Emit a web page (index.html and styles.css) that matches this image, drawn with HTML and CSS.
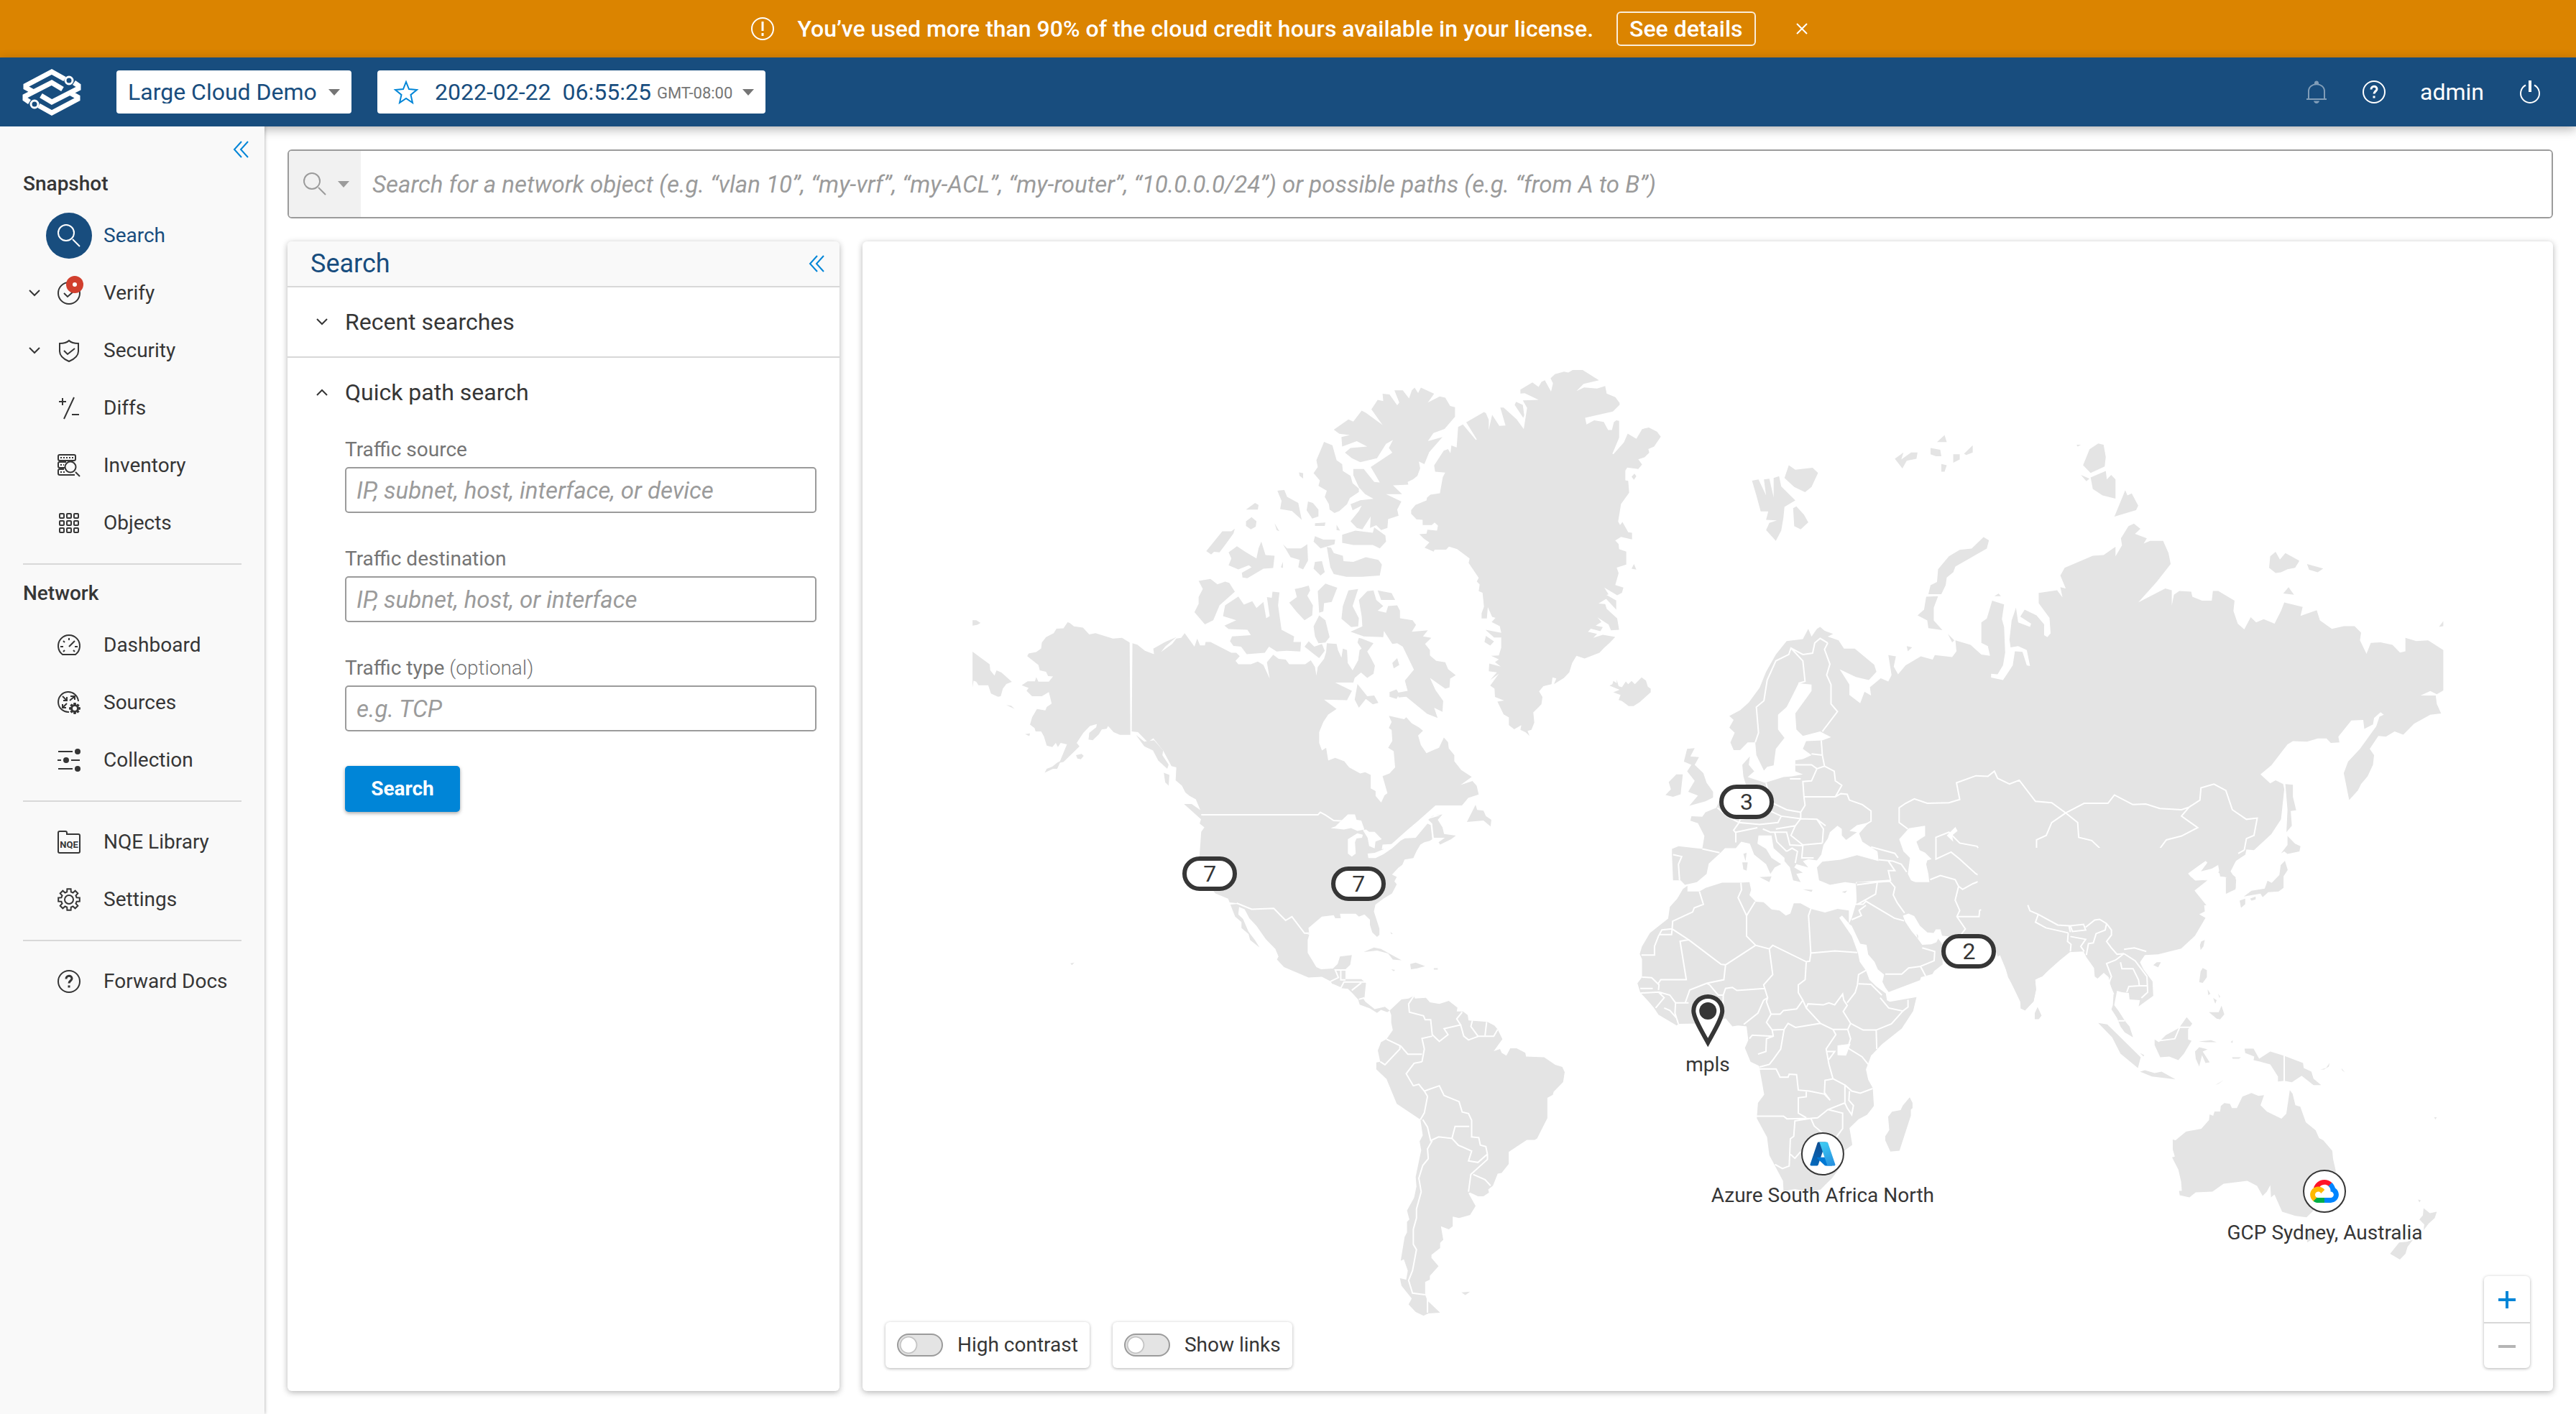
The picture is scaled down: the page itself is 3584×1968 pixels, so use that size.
FILE: index.html
```html
<!DOCTYPE html>
<html lang="en">
<head>
<meta charset="utf-8">
<title>Search - Large Cloud Demo</title>
<link rel="stylesheet" href="styles.css">
</head>
<body>
<svg class="defs" aria-hidden="true">
  <symbol id="gear" viewBox="0 0 32 32"><path d="M26.6 13.2 30.8 13.4 30.8 18.6 26.6 18.8 25.5 21.5 28.3 24.6 24.6 28.3 21.5 25.5 18.8 26.6 18.6 30.8 13.4 30.8 13.2 26.6 10.5 25.5 7.4 28.3 3.7 24.6 6.5 21.5 5.4 18.8 1.2 18.6 1.2 13.4 5.4 13.2 6.5 10.5 3.7 7.4 7.4 3.7 10.5 6.5 13.2 5.4 13.4 1.2 18.6 1.2 18.8 5.4 21.5 6.5 24.6 3.7 28.3 7.4 25.5 10.5Z"/></symbol>
  <symbol id="search" viewBox="0 0 32 32"><circle cx="12" cy="12" r="11"/><path d="m21 21 10 10"/></symbol>
  <symbol id="help" viewBox="0 0 32 32"><circle cx="16" cy="16" r="15"/><path d="M12 12.500c0-5.500 8-5.500 8-.5 0 3-4 3-4 6.500M16 21.500v3" stroke-width="3"/></symbol>
  <symbol id="collapse" viewBox="0 0 24 24"><path d="M13 1 3 12l10 11M22 1 12 12l10 11"/></symbol>
  <symbol id="down" viewBox="0 0 16 16"><path d="m1 4 7 7 7-7"/></symbol>
  <symbol id="caret" viewBox="0 0 16 9"><path d="M0 0h16L8 9z" fill="currentColor" stroke="none"/></symbol>
</svg>

<div class="banner" role="alert">
  <svg class="icon" viewBox="0 0 32 32"><circle cx="16" cy="16" r="15"/><path d="M16 6v13M16 22v4" stroke-width="3"/></svg>
  <span>You’ve used more than 90% of the cloud credit hours available in your license.</span>
  <button class="banner-action" type="button">See details</button>
  <button class="banner-close" type="button" aria-label="Dismiss"><svg class="mini" viewBox="0 0 16 16"><path d="m1 1 14 14M15 1 1 15"/></svg></button>
</div>

<header class="topbar">
  <svg class="logo" viewBox="0 0 80 65" aria-label="Forward"><path d="M15 32 4 26V23L40 4l18 10M71 19l6 4v4L40 46l-15-9M65 33l11 6v3L40 61 22 51M9 46l-6-4v-4l37-19 15 9"/><circle cx="64" cy="16" r="5"/><circle cx="16" cy="49" r="5"/></svg>
  <div class="picker">
    <select aria-label="Network"><option>Large Cloud Demo</option></select>
    <svg class="caret"><use href="#caret"/></svg>
  </div>
  <button class="snapshot" type="button">
    <svg class="icon star" viewBox="0 0 32 32"><path d="m16 2 4 10 11 1-8.500 7L25 31l-9-6-9 6 2.500-11L1 13l11-1z"/></svg>
    <span class="date">2022-02-22</span><span class="time">06:55:25</span><span class="zone">GMT-08:00</span>
    <svg class="caret"><use href="#caret"/></svg>
  </button>
  <div class="account">
    <button type="button" class="bell" aria-label="Notifications"><svg class="icon" viewBox="0 0 32 32"><path d="M5 26V15c0-13 22-13 22 0v11M2 26h28"/><path d="M12 28.500h8c-1 4.500-7 4.500-8 0zM13 5c-1-6 7-6 6 0z" fill="currentColor" stroke="none"/></svg></button>
    <button type="button" aria-label="Help"><svg class="icon"><use href="#help"/></svg></button>
    <button type="button">admin</button>
    <button type="button" aria-label="Sign out"><svg class="icon" viewBox="0 0 32 32"><path d="M10 6.500a13 13 0 1 0 12 0"/><path d="M16 0v16" stroke-width="4"/></svg></button>
  </div>
</header>

<div class="layout">
  <nav class="sidebar">
    <button class="collapse-nav" type="button" aria-label="Collapse menu"><svg class="collapse"><use href="#collapse"/></svg></button>
    <h2>Snapshot</h2>
    <a class="item active" href="#search-panel"><span class="glyph"><svg class="icon"><use href="#search"/></svg></span>Search</a>
    <a class="item" href="#verify"><svg class="mini"><use href="#down"/></svg><span class="glyph"><svg class="icon" viewBox="0 0 32 32"><circle cx="16" cy="16" r="15"/><path d="m9 16 5 5 9-8"/><circle cx="24" cy="4" r="12" fill="#d13f2e" stroke="none"/><circle cx="24" cy="4" r="3" fill="#fff" stroke="none"/></svg></span>Verify</a>
    <a class="item" href="#security"><svg class="mini"><use href="#down"/></svg><span class="glyph"><svg class="icon" viewBox="0 0 32 32"><path d="M16 2c-3 3-8 4-13 4v11c0 7 6 11 13 14 7-3 13-7 13-14V6c-5 0-10-1-13-4zM9 16l5 5 10-8"/></svg></span>Security</a>
    <a class="item" href="#diffs"><span class="glyph"><svg class="icon" viewBox="0 0 32 32"><path d="M2 7h10M7 2v10M23 1 9 31M20 25h10"/></svg></span>Diffs</a>
    <a class="item" href="#inventory"><span class="glyph"><svg class="icon" viewBox="0 0 32 32"><path d="M24 29H3a2 2 0 0 1-2-2v-4a2 2 0 0 1 2-2h6M10 19H3a2 2 0 0 1-2-2v-4a2 2 0 0 1 2-2h9M3 1h20a2 2 0 0 1 2 2v4a2 2 0 0 1-2 2H3a2 2 0 0 1-2-2V3a2 2 0 0 1 2-2z"/><path d="M4 5h18M4 15h5M4 25h7" stroke-dasharray="2"/><circle cx="18" cy="18" r="7.500"/><path d="m25 25 6 6"/></svg></span>Inventory</a>
    <a class="item" href="#objects"><span class="glyph"><svg class="icon" viewBox="0 0 32 32"><g><rect x="3" y="3" width="6" height="6" rx="1"/><rect x="13" y="3" width="6" height="6" rx="1"/><rect x="23" y="3" width="6" height="6" rx="1"/><rect x="3" y="13" width="6" height="6" rx="1"/><rect x="13" y="13" width="6" height="6" rx="1"/><rect x="23" y="13" width="6" height="6" rx="1"/><rect x="3" y="23" width="6" height="6" rx="1"/><rect x="13" y="23" width="6" height="6" rx="1"/><rect x="23" y="23" width="6" height="6" rx="1"/></g></svg></span>Objects</a>
    <hr>
    <h2>Network</h2>
    <a class="item" href="#dashboard"><span class="glyph"><svg class="icon" viewBox="0 0 32 32"><path d="M7 29h18A15 15 0 1 0 7 29zM16 18l8-8M16 6v3M4 18h4M24 18h4M8 10l2 2M8 25l2-2M24 25l-2-2"/></svg></span>Dashboard</a>
    <a class="item" href="#sources"><span class="glyph"><svg class="icon" viewBox="0 0 32 32"><path d="M16 29A14 14 0 1 1 29 14M7 7l6 6M13 8v5H8M17 13l7-6M18 7h6v5M13 17l-6 6M7 18v5h5"/><svg x="16" y="16" width="16" height="16" viewBox="0 0 32 32"><use href="#gear" fill="#363636"/><circle cx="16" cy="16" r="6" fill="#f9f9f9" stroke="none"/></svg></svg></span>Sources</a>
    <a class="item" href="#collection"><span class="glyph"><svg class="icon" viewBox="0 0 32 32"><path d="M1 4h20M0 16h5M19 16h12M1 28h20"/><g fill="#363636" stroke="none"><circle cx="28" cy="4" r="4"/><circle cx="12" cy="16" r="4"/><circle cx="28" cy="28" r="4"/></g></svg></span>Collection</a>
    <hr>
    <a class="item" href="#nqe"><span class="glyph"><svg class="icon" viewBox="0 0 32 32"><path d="M1 29V3a2 2 0 0 1 2-2h8a2 2 0 0 1 2 2v2h16a2 2 0 0 1 2 2v22a2 2 0 0 1-2 2H3a2 2 0 0 1-2-2z"/><text x="16" y="24" class="nqe">NQE</text></svg></span>NQE Library</a>
    <a class="item" href="#settings"><span class="glyph"><svg class="icon"><use href="#gear"/><circle cx="16" cy="16" r="6"/></svg></span>Settings</a>
    <hr>
    <a class="item" href="#docs"><span class="glyph"><svg class="icon"><use href="#help"/></svg></span>Forward Docs</a>
  </nav>

  <main>
    <div class="searchbar">
      <button type="button" aria-label="Search type"><svg class="icon"><use href="#search"/></svg><svg class="caret"><use href="#caret"/></svg></button>
      <input type="text" aria-label="Search" placeholder="Search for a network object (e.g. “vlan 10”, “my-vrf”, “my-ACL”, “my-router”, “10.0.0.0/24”) or possible paths (e.g. “from A to B”)">
    </div>

    <div class="panels">
      <section class="panel search-panel" id="search-panel">
        <div class="panel-head"><h1>Search</h1><button type="button" aria-label="Collapse panel"><svg class="collapse"><use href="#collapse"/></svg></button></div>
        <button class="fold" type="button"><svg class="mini"><use href="#down"/></svg>Recent searches</button>
        <button class="fold open" type="button"><svg class="mini"><use href="#down"/></svg>Quick path search</button>
        <form class="path-form">
          <div class="field"><label for="src">Traffic source</label><input id="src" type="text" placeholder="IP, subnet, host, interface, or device"></div>
          <div class="field"><label for="dst">Traffic destination</label><input id="dst" type="text" placeholder="IP, subnet, host, or interface"></div>
          <div class="field"><label for="type">Traffic type <span>(optional)</span></label><input id="type" type="text" placeholder="e.g. TCP"></div>
          <button class="primary" type="button">Search</button>
        </form>
      </section>

      <section class="panel map-panel" aria-label="Map">
        <svg class="world" viewBox="1200 336 2352 1600" aria-hidden="true">
          <g transform="translate(1340 480) scale(.48469 .47194)">
            <!-- Alaska and the eastern tip of Chukotka -->
            <path d="M478 878 456 864 430 866 380 850 362 854 344 834 318 830 306 820 300 818 288 836 268 837 260 850 238 862 226 878 224 895 210 906 188 910 184 918 216 944 220 960 238 964 244 977 258 978 246 993 216 993 210 980 206 992 185 992 168 1004 188 1012 182 1020 198 1036 226 1036 246 1024 250 1040 254 1058 240 1068 236 1078 212 1074 198 1098 192 1120 205 1130 208 1140 224 1140 232 1155 240 1182 256 1186 266 1174 272 1186 280 1174 298 1178 278 1228 270 1232 256 1244 240 1250 234 1262 258 1250 270 1250 278 1232 288 1230 312 1206 334 1184 326 1174 345 1144 364 1124 384 1118 382 1128 362 1144 360 1164 372 1166 390 1148 398 1134 412 1132 416 1124 432 1142 450 1150 480 1150ZM324 1210 340 1206 346 1212 338 1222 328 1220ZM27 905 76 942 78 960 90 975 96 960 110 966 140 994 124 1000 114 1014 108 1036 100 1038 80 1028 72 1004 44 1004 38 994 30 990 27 1010ZM27 812 38 812 50 820 40 826 27 828ZM124 1062 138 1064 148 1074 136 1068ZM178 1148 192 1146 190 1154Z"/>
            <!-- Canadian mainland -->
            <path d="M486 880 500 884 522 902 548 912 546 896 580 876 612 862 580 890 568 906 600 882 612 866 626 864 636 850 664 890 672 866 680 886 694 886 696 876 710 876 770 908 784 908 794 918 782 932 790 942 826 942 846 934 862 944 880 984 872 936 890 914 906 926 926 928 936 942 982 942 998 930 1010 950 1014 976 1018 950 1036 926 1042 906 1044 880 1072 882 1076 900 1086 922 1090 896 1102 900 1104 938 1118 960 1134 930 1138 900 1144 896 1132 878 1136 864 1144 866 1178 880 1160 904 1170 922 1182 946 1178 970 1160 982 1142 966 1124 982 1120 996 1068 996 1116 1020 1102 1048 1036 1046 1072 1074 1048 1090 1034 1112 1022 1142 1022 1174 1030 1196 1042 1188 1048 1226 1068 1218 1094 1228 1108 1246 1140 1264 1154 1260 1170 1268 1170 1308 1184 1316 1184 1330 1200 1350 1210 1328 1218 1322 1204 1272 1224 1264 1240 1246 1236 1198 1220 1188 1232 1168 1230 1136 1222 1130 1230 1112 1222 1094 1266 1104 1272 1098 1288 1116 1308 1128 1320 1138 1306 1152 1314 1180 1330 1204 1352 1194 1366 1188 1380 1158 1392 1172 1394 1190 1410 1210 1410 1228 1430 1254 1460 1274 1428 1298 1462 1286 1474 1300 1480 1326 1450 1336 1432 1358 1356 1358 1306 1404 1276 1430 1210 1490 1180 1512 1160 1512 1100 1460 1022 1388 704 1384 694 1396 680 1370 668 1340 650 1330 638 1320 628 1300 610 1284 612 1246 598 1242 574 1196 546 1160 530 1172 502 1142 484 1140Z"/>
            <path d="M496 1150 520 1170 548 1166 574 1196 572 1210 590 1238 586 1250 560 1226 545 1196 520 1184ZM576 1262 592 1268 590 1300 580 1290ZM634 1354 656 1354 684 1374 696 1404 684 1400Z"/>
            <!-- Arctic islands -->
            <path d="M1064 250 1106 220 1120 226 1144 194 1156 200 1204 236 1172 190 1190 162 1206 166 1204 144 1224 146 1246 178 1252 170 1238 134 1262 134 1280 158 1288 134 1296 126 1306 142 1314 126 1352 144 1334 170 1368 152 1384 156 1398 180 1412 184 1412 212 1382 248 1350 260 1334 284 1376 272 1338 316 1324 352 1308 344 1312 364 1304 386 1292 396 1276 404 1278 412 1234 414 1260 440 1214 440 1258 462 1246 486 1250 504 1220 514 1218 540 1200 546 1186 532 1168 540 1170 506 1146 544 1130 540 1112 520 1136 490 1144 474 1118 488 1112 470 1140 458 1178 454 1154 440 1136 420 1120 384 1120 366 1150 366 1180 404 1196 406 1186 388 1170 360 1232 318 1222 304 1234 280 1214 292 1188 334 1140 346 1116 334 1096 318 1112 304 1160 300 1130 284 1088 300 1086 272 1110 266 1080 262ZM1036 286 1060 296 1072 340 1088 352 1090 372 1112 386 1118 408 1136 424 1136 434 1110 452 1102 470 1080 490 1066 496 1052 486 1050 470 1038 448 1044 430 1020 416 1024 400 1006 378 1018 360 1014 340 1028 306ZM1088 560 1126 548 1176 554 1180 538 1212 562 1214 580 1196 600 1176 590 1120 590 1088 584ZM1044 596 1056 598 1064 614 1090 622 1092 638 1120 640 1156 626 1192 634 1202 648 1196 680 1146 684 1100 684 1064 676 1054 656ZM902 430 922 428 930 448 962 466 972 516 944 490 910 484 914 460ZM990 462 1004 466 1020 486 1020 506 1002 512 986 488ZM964 376 976 378 976 394 966 386ZM1010 526 1040 524 1038 534 1010 534ZM1010 564 1034 574 1068 574 1066 588 1026 600 1006 580ZM812 486 838 466 848 472 846 486ZM812 520 828 508 842 520 840 536 826 544 812 534ZM698 608 744 550 770 550 780 542 776 556 752 590 736 612 720 610 712 618ZM762 650 770 630 762 612 786 594 810 610 842 630 848 600 856 580 868 620 894 622 890 658 862 660 816 688 802 686 800 672 828 656 820 650 790 662ZM912 656 918 640 918 658ZM918 588 930 600 970 600 988 588 990 636 976 662 962 656 966 634 940 626ZM1010 640 1030 638 1038 670 1026 680 1006 660ZM676 696 710 690 730 706 752 698 764 702 780 728 736 768 718 812 694 824 664 788 676 764 676 744 688 720ZM746 800 752 768 790 742 806 766 830 756 842 776 862 758 870 806 880 800 872 744 886 746 888 728 908 730 904 768 914 840 950 860 948 876 970 876 968 904 930 902 900 904 878 890 866 908 814 912 798 890 776 888 766 874 772 860 826 856 816 840 762 838 750 828 784 812ZM936 760 958 744 952 720 970 716 992 710 996 724 988 740 1004 768 1002 798 980 812 958 788ZM1018 726 1040 704 1074 716 1058 758 1036 762 1034 786 1022 790ZM1006 830 1022 798 1040 812 1052 862 1040 878 1020 880 1010 860ZM1086 808 1090 770 1106 724 1134 720 1118 770 1136 806 1134 830 1114 832ZM1136 752 1160 726 1178 724 1186 752 1206 770 1190 784 1214 790 1220 770 1246 768 1254 784 1254 806 1290 812 1300 826 1288 846 1334 842 1320 860 1344 864 1326 882 1340 900 1340 916 1358 932 1384 936 1392 956 1414 974 1398 984 1396 1010 1384 1014 1362 998 1340 982 1356 1018 1378 1050 1376 1082 1352 1070 1362 1100 1332 1088 1296 1058 1272 1038 1250 1040 1246 1026 1276 1020 1268 990 1294 958 1262 890 1246 880 1232 882 1208 844 1206 862 1150 860 1112 846 1146 830 1144 800ZM1190 724 1230 732 1240 752 1200 752ZM1232 938 1246 924 1252 944 1236 954ZM1224 1024 1244 1016 1252 1030 1244 1044 1224 1038ZM1124 1046 1132 1000 1160 1036 1180 1034 1192 1056 1176 1060 1156 1044 1136 1070ZM980 890 992 874 1008 890 1030 882 1038 902 1022 924 1002 908ZM1072 530 1082 548 1072 546ZM894 526 908 550 900 546Z"/>
          </g>
          <g transform="translate(1340 1120) scale(.54847 .52296)">
            <!-- United States, Mexico and Central America -->
            <path d="M622 28 900 28 906 22 940 42 976 60 1020 70 1030 110 1026 136 1046 142 1066 132 1088 116 1116 90 1148 88 1178 50 1186 54 1190 92 1184 96 1170 100 1160 106 1150 124 1142 142 1120 146 1114 160 1104 168 1088 186 1100 192 1094 204 1100 212 1088 236 1066 250 1046 266 1042 284 1056 330 1056 346 1050 352 1038 340 1032 320 1032 306 1018 292 1004 298 996 290 956 290 958 302 944 302 940 294 910 298 876 328 878 344 866 342 834 298 818 308 788 276 732 278 694 262 676 260 672 250 640 236 620 210 600 160 600 130 604 72 612 60 600 50 606 30Z"/>
            <path d="M1190 50 1180 40 1190 30 1216 26 1204 40 1216 60 1220 78 1250 82 1238 92 1210 106 1206 100 1222 88 1194 88ZM1278 46 1300 0 1304 14 1320 16 1326 30 1340 40 1338 58 1320 42Z"/>
            <path d="M678 266 700 264 732 278 788 276 818 308 834 298 866 342 878 346 874 360 874 394 896 432 908 438 938 436 950 424 956 404 986 400 982 426 970 438 970 464 1010 464 1022 474 1018 514 1014 514 1020 524 1044 544 1070 538 1082 548 1076 552 1060 546 1050 554 1032 542 1006 532 1002 518 986 500 976 490 958 488 938 480 932 470 910 458 876 460 814 432 796 412 800 404 792 384 768 358 744 322 726 302 714 278 700 272 698 292 710 304 724 338 740 360 752 380 728 360 724 344 706 328 706 312 690 298ZM1016 392 1042 380 1060 384 1112 414 1090 412 1078 396 1050 388ZM1134 424 1148 420 1172 430 1150 436 1136 438ZM1086 438 1096 440 1092 443ZM1194 435 1204 435 1204 439 1194 439ZM272 422 282 420 276 427ZM1084 338 1090 344 1086 344Z"/>
            <!-- South America -->
            <path d="M1082 548 1112 518 1130 516 1144 508 1146 516 1174 514 1184 526 1208 530 1232 522 1254 540 1252 550 1268 550 1280 560 1282 574 1330 578 1348 588 1356 598 1368 624 1346 656 1362 650 1366 660 1378 668 1388 648 1404 648 1426 660 1428 670 1474 672 1502 692 1520 698 1526 712 1522 738 1498 764 1496 772 1482 780 1482 834 1456 888 1450 892 1430 892 1384 924 1384 956 1366 980 1356 982 1344 1014 1332 1024 1334 1032 1320 1042 1306 1042 1286 1032 1282 1034 1300 1068 1286 1092 1258 1100 1242 1096 1242 1122 1232 1130 1212 1122 1218 1158 1210 1166 1210 1180 1188 1198 1188 1206 1206 1228 1184 1254 1184 1264 1172 1270 1172 1304 1178 1320 1210 1352 1180 1354 1168 1360 1148 1350 1130 1330 1138 1314 1112 1280 1108 1260 1124 1264 1128 1240 1118 1210 1110 1214 1120 1150 1126 1138 1126 1110 1132 1104 1126 1080 1144 1046 1150 1016 1148 990 1162 920 1158 896 1166 880 1160 838 1100 796 1074 730 1048 704 1048 686 1058 684 1052 654 1060 632 1074 624 1090 600 1086 580 1086 560ZM1264 1298 1286 1296 1274 1305Z"/>
            <path class="border" d="M604 27H900L906 20 920 28 940 42 976 44M694 262 732 278 788 276 818 308 834 298 866 342H878M932 470 952 460 944 440H970M958 440V466H970M936 478 958 488 966 472 1022 472M986 494 1010 474M1004 518 1018 514M1144 508 1130 530 1132 552 1168 562 1172 572 1186 572 1190 612 1208 630 1230 612 1220 596 1262 586 1252 570 1266 552M1262 586 1270 616 1282 626 1308 616 1346 616 1356 598M1292 574 1288 590 1306 616M1328 578 1324 614M1190 616 1164 622 1170 650 1164 684M1164 664H1128L1110 642 1074 624M1108 640V650L1070 692 1058 684M1164 684 1144 688 1124 716 1142 748 1156 744 1170 762 1178 776 1170 820 1160 838M1170 762 1208 748 1220 774 1258 790 1266 818 1282 822 1290 840V884M1166 838 1178 858 1186 894 1206 884 1240 888 1248 856 1284 856M1190 894 1178 916 1180 942 1166 960 1156 994 1162 1030 1150 1076V1100L1142 1130V1170L1150 1184 1140 1240 1130 1266 1140 1300 1172 1304M1178 1310V1352M1240 888 1256 906 1290 922 1282 948 1306 952 1330 930 1326 910 1312 906 1308 886 1288 884M1330 930V944L1288 984 1282 1030M1294 984 1324 998 1338 1014"/>
            <path class="water" d="M932 62 944 58 976 26 994 26 998 40 1010 42 1018 66 1000 70 984 62 966 66ZM976 92 1000 76 1014 80 1012 88 998 90 994 100 996 130 986 138 976 130ZM1014 68 1022 66 1030 72 1044 72 1062 92 1046 98 1044 116 1030 110 1026 88ZM1026 130 1044 128 1072 116 1080 122 1064 130 1046 142 1028 142ZM1064 106 1094 104 1088 116 1062 118ZM1090 106 1112 88 1150 52 1196 28 1212 28 1180 38 1120 90Z"/>
          </g>
          <g transform="translate(1900 480) scale(.33333 .35714)">
            <!-- Greenland and Iceland -->
            <path d="M286 470 326 412 344 406 354 422 358 392 380 400 386 320 406 310 460 370 464 368 420 302 494 262 502 266 514 292 514 332 528 272 558 316 584 314 562 244 576 244 630 290 660 328 674 246 656 216 722 214 664 188 646 190 646 174 696 146 722 164 734 144 748 138 774 182 782 150 772 130 790 114 828 104 846 108 864 98 906 98 974 138 910 152 880 180 912 166 966 170 1000 160 1006 190 1042 204 1060 226 1060 234 1032 260 916 284 922 310 954 294 994 300 1012 332 1028 332 1036 302 1046 294 1058 296 1058 362 1030 424 1034 426 1078 380 1094 346 1130 366 1154 328 1182 322 1216 338 1232 358 1204 396 1180 406 1184 420 1164 438 1138 446 1154 466 1138 484 1092 478 1084 490 1084 528 1096 530 1100 576 1066 620 1054 688 1062 702 1072 690 1096 730 1112 732 1112 758 1066 748 1042 762 1056 776 1058 796 1088 806 1088 856 1048 868 1056 890 1042 936 1076 946 1070 966 1050 976 996 946 1014 972 960 986 1004 974 1046 996 1046 1032 1004 990 972 1008 1000 1010 1006 1028 1050 1066 1058 1110 1024 1112 1014 1090 968 1062 984 1080 960 1094 990 1100 980 1116 940 1106 928 1118 966 1126 950 1142 990 1130 1042 1138 1020 1160 996 1180 976 1200 914 1222 880 1212 862 1240 850 1276 828 1298 786 1322 796 1300 780 1296 776 1322 742 1330 724 1350 738 1372 734 1400 722 1412 700 1432 704 1472 692 1500 676 1504 684 1524 668 1510 646 1500 650 1482 620 1498 598 1482 598 1452 576 1440 550 1390 578 1386 540 1372 538 1340 520 1328 556 1282 520 1306 548 1276 514 1272 516 1242 564 1254 540 1236 556 1226 524 1212 556 1210 566 1180 566 1140 536 1140 500 1110 566 1122 560 1096 526 1080 542 1064 528 1060 510 1022 506 1066 484 1066 484 1046 494 1020 488 966 472 960 476 934 464 922 472 908 430 850 434 832 382 796 348 786 336 798 288 798 284 806 246 790 266 770 244 756 224 738 254 736 258 720 298 724 302 704 288 692 276 702 238 702 238 682 212 680 190 658 190 644 208 624 254 606 256 596 270 584 310 578 322 516 332 498 290 494ZM496 1158 502 1134 536 1156 520 1172ZM622 234 628 222 656 234 662 274 658 284ZM1110 514 1122 502 1130 512 1120 526ZM1110 872 1120 854 1130 876ZM1018 1328 1030 1322 1034 1310 1048 1318 1048 1304 1056 1330 1070 1334 1086 1312 1096 1322 1110 1310 1124 1322 1152 1296 1170 1308 1178 1332 1190 1340 1190 1354 1144 1392 1118 1408 1098 1408 1070 1388 1056 1384 1064 1364 1034 1354 1060 1344Z"/>
          </g>
          <g transform="translate(2260 560) scale(.75255 .44643)">
            <!-- Europe, Russia and northern Asia -->
            <path d="M362 700 370 712 386 722 376 730 396 742 406 768 426 768 462 818 466 840 452 866 428 856 398 832 416 880 416 912 436 938 444 902 456 914 454 888 474 860 488 870 494 850 488 788 502 792 498 824 506 848 520 820 548 792 570 802 574 788 606 794 614 776 612 742 640 756 660 786 676 790 672 760 660 750 660 686 670 674 680 618 702 630 698 676 702 700 704 780 700 820 690 848 678 846 678 858 700 866 718 820 722 776 736 778 744 820 750 822 744 772 728 760 714 764 712 740 716 680 724 640 728 686 750 700 752 690 732 668 740 646 762 664 776 692 776 726 782 732 788 720 786 672 766 626 766 594 800 586 810 608 806 576 816 580 806 540 814 516 866 478 886 476 908 450 908 480 920 446 918 424 932 386 942 378 954 394 944 410 966 424 960 440 972 432 996 432 1006 470 1010 504 984 560 950 624 1000 580 1012 586 1012 634 1016 600 1026 588 1048 590 1050 606 1068 618 1086 618 1088 588 1098 588 1128 618 1126 650 1134 690 1146 708 1158 670 1168 686 1182 676 1202 690 1214 650 1220 624 1254 638 1250 666 1280 648 1286 680 1308 706 1330 698 1350 698 1362 718 1360 742 1372 784 1380 750 1398 748 1420 756 1434 780 1444 776 1444 734 1464 744 1486 742 1514 772 1514 898 1502 910 1490 900 1472 914 1500 914 1502 940 1510 970 1490 974 1460 1002 1440 1036 1424 1026 1408 1042 1394 1040 1378 1080 1386 1100 1384 1130 1374 1166 1362 1190 1356 1210 1340 1240 1330 1156 1338 1120 1360 1080 1390 1010 1396 980 1404 974 1398 966 1386 984 1384 1004 1368 1018 1366 990 1344 992 1320 1042 1322 1060 1306 1062 1298 1048 1282 1048 1262 1058 1236 1056 1226 1066 1196 1132 1176 1160 1194 1188 1204 1178 1218 1190 1220 1206 1214 1300 1196 1346 1164 1396 1150 1394 1148 1410 1130 1430 1112 1456 1130 1480 1130 1514 1112 1532 1112 1480 1098 1466 1110 1430 1086 1454 1066 1462 1080 1430 1076 1428 1040 1468 1056 1492 1078 1490 1054 1522 1076 1568 430 1568 428 1500 408 1496 380 1504 360 1490 356 1450 366 1432 400 1426 430 1412 470 1430 468 1400 440 1370 434 1344 452 1310 430 1318 416 1336 430 1340 410 1364 402 1350 402 1330 394 1320 380 1340 376 1360 368 1380 364 1410 356 1428 340 1424 330 1430 340 1450 318 1440 314 1450 330 1466 318 1470 326 1496 312 1490 306 1450 296 1430 296 1420 276 1390 272 1350 248 1350 246 1376 262 1392 272 1420 290 1440 278 1450 270 1470 262 1440 240 1410 232 1376 216 1370 206 1390 186 1390 178 1404 156 1438 152 1470 134 1496 112 1504 104 1490 90 1490 88 1412 88 1392 100 1384 144 1392 148 1352 136 1312 122 1304 124 1290 144 1292 150 1278 170 1264 176 1240 200 1220 226 1200 220 1166 218 1130 232 1104 230 1130 240 1150 228 1168 260 1186 294 1168 310 1166 330 1160 316 1150 316 1116 330 1112 346 1100 330 1080 336 1056 366 1054 382 1044 362 1026 330 1040 318 1020 316 970 346 900 346 880 322 876 312 910 300 950 284 974 284 1020 296 1046 280 1080 276 1132 264 1136 258 1148 244 1100 242 1060 228 1060 214 1084 202 1084 196 1060 204 1030 194 1014 202 990 194 978 214 960 230 936 250 890 262 840 280 786 300 744 330 738 340 706 346 730 356 706Z"/>
            <!-- British Isles, Mediterranean and Arctic islands, Sakhalin, Hokkaido -->
            <path d="M116 1080 130 1078 122 1104 138 1106 130 1130 146 1156 152 1186 164 1214 164 1232 150 1244 120 1258 136 1226 118 1214 130 1180 116 1150 124 1130 110 1120ZM82 1184 96 1160 108 1160 104 1222 90 1230 76 1224 86 1206ZM250 1480 272 1478 268 1496ZM218 1434 228 1434 226 1460 220 1456ZM220 1408 226 1404 224 1430ZM402 1526 412 1522 408 1530ZM330 1518 348 1520 346 1526ZM236 244 248 240 262 290 258 240 268 238 276 296 276 236 286 230 290 262 316 306 296 326 294 360 290 400 280 432 262 398 268 376 282 368 262 366 266 340 252 340 244 290ZM296 236 304 196 316 210 348 204 358 220 346 264 334 280 314 264ZM312 330 318 324 332 350 340 374 326 396 314 386ZM578 124 592 102 596 124ZM500 176 516 156 512 178 530 156 542 156 540 176 522 182 514 206ZM566 142 584 148 586 168 576 168 566 162ZM608 162 620 162 620 178 608 188ZM628 160 644 134 644 156 632 164ZM586 192 596 196 592 216 586 216ZM848 196 860 146 876 128 886 132 890 170 888 200 862 220ZM862 234 890 214 892 240 900 226 908 240 908 300 884 290 866 270ZM844 226 860 238 854 246ZM926 274 930 290 938 284 950 322 946 336 906 356ZM1194 480 1204 466 1212 490 1222 470 1248 494 1240 516 1226 520 1214 530 1204 532 1192 516ZM1262 504 1292 518 1282 530 1266 522ZM1218 596 1228 576 1238 600ZM664 420 674 430 670 456 612 512 608 530 596 546 594 570 586 598 562 598 566 570 578 560 580 520 600 480 620 460 642 456ZM558 606 580 604 572 640 572 680 588 710 562 704 560 680 542 664 554 646ZM598 722 610 742 606 748ZM522 760 532 764 524 776ZM684 604 692 596 696 604ZM1222 1190 1236 1192 1236 1230 1242 1272 1232 1274 1234 1320 1224 1340 1226 1270ZM1226 1352 1240 1376 1250 1384 1248 1400 1226 1408 1220 1400 1214 1406 1226 1380ZM1506 700 1514 682 1514 698ZM836 132 844 132 838 138Z"/>
            <path class="border" d="M242 1060 248 1030 244 950 258 930 264 866 280 806 304 786 308 766 330 786 348 782 352 750 362 736 376 750M308 766 330 806 334 870 322 876M376 750 370 770 380 816 374 850 382 880V940L394 964 366 1026M364 1054 366 1100 370 1134M346 1096 366 1100M316 1130H346L356 1142 370 1134 388 1150 390 1180 402 1194 390 1230M356 1142 346 1180 330 1182 332 1230M326 1174H306M332 1230H390L400 1220 412 1222 416 1240 440 1254 456 1274V1306L434 1328M332 1230 334 1256 326 1278V1298M262 1186 270 1246 300 1270 326 1278M262 1268 290 1290 326 1298 356 1300 372 1320M250 1290 214 1300 212 1310 250 1316 284 1310 290 1290M316 1320 308 1350 330 1380 366 1374M326 1298 316 1320 280 1330M356 1300 368 1330 366 1374M256 1330 270 1340 300 1340 306 1380 330 1382 328 1420 350 1420M278 1340 282 1370 300 1400M300 1400 310 1390 320 1400 316 1436M206 1340 246 1326M212 1310 202 1334 206 1342V1372M172 1264 190 1290 212 1310M144 1392 176 1404M90 1410 106 1416 100 1440 102 1490M524 1330 508 1310V1264L520 1250 536 1236 560 1250 600 1248 620 1238 614 1186 650 1164 672 1166 684 1150 690 1172 712 1190 730 1178 760 1244 790 1248 816 1280 790 1310 780 1350 762 1364V1404L728 1394 710 1406 690 1398 668 1430 652 1384 620 1374 600 1340 576 1356V1424L604 1402 620 1424 650 1470 668 1484M762 1404 730 1440 706 1450 690 1446 690 1420 668 1430M668 1484 670 1454 690 1446M690 1430 704 1440M706 1450 722 1476 700 1500M816 1280 850 1250 894 1250 906 1224 940 1254 964 1252 990 1266 1030 1270 1044 1262 1064 1240 1066 1202 1090 1190 1112 1210 1124 1270 1150 1300 1170 1296 1164 1350 1150 1360 1146 1396M816 1280 838 1310 840 1356 864 1366 884 1398 920 1404 948 1420 986 1400 1002 1364 1030 1352 1060 1326 1030 1290 1044 1262M1146 1396 1110 1430M1112 1480 1126 1470M456 1386 500 1406 506 1420M470 1426 496 1430 512 1440 522 1464M488 1430 500 1460 488 1460 492 1490 428 1498"/>
            <path class="water" d="M556 1320 526 1328 508 1362 516 1400 528 1420 524 1470 530 1490 546 1502 564 1498 562 1470 558 1440 560 1428 568 1424 556 1404 546 1396 540 1370 548 1360 556 1352ZM596 1350 612 1324 616 1336 606 1350 608 1370Z"/>
          </g>
          <g transform="translate(2260 1160) scale(.39541 .35714)">
            <!-- Middle East and India -->
            <path d="M818 190 818 262 800 330 790 352 800 360 830 430 852 434 858 472 880 500 892 530 914 550 908 578 918 600 930 618 1040 572 1044 560 1084 548 1090 536 1120 510 1118 430 1104 410 1098 424 1080 432 1048 434 1028 404 1010 380 988 344 980 320 1000 312 1020 322 1040 360 1066 386 1088 388 1096 374 1112 374 1118 398 1200 410 1300 440 1314 480 1336 462 1340 520 1350 560 1394 650 1394 682 1410 690 1440 654 1448 610 1446 570 1470 556 1530 496 1568 462 1600 440V190ZM1444 700 1454 676 1468 710 1458 724 1444 724ZM1028 390 1034 400 1032 414Z"/>
            <!-- Africa and Madagascar -->
            <path d="M206 216 222 204 222 226 264 226 286 212 344 192 410 192 440 190 446 220 440 240 462 266 490 268 518 296 546 300 568 320 584 312 596 272 620 272 656 294 706 308 750 294 790 300 790 350 766 320 756 328 800 400 822 466 828 500 850 534 862 570 886 596 920 624 924 650 934 656 1028 638 1016 692 976 760 906 822 868 866 850 920 858 960 874 992 878 1062 854 1096 824 1114 792 1148 802 1214 774 1236 760 1300 730 1344 690 1388 650 1396 600 1386 560 1394 558 1354 510 1254 502 1184 466 1110 470 1050 492 1018 484 968 474 906 444 890 424 836 436 806 430 752 400 748 380 752 356 720 300 740 190 742 184 748 120 706 104 680 86 656 56 620 46 584 62 560 62 490 54 470 62 440 90 388 154 332 160 286 186 254ZM1004 1028 1014 1050 1014 1070 1008 1076 1008 1100 968 1236 936 1240 918 1196 918 1180 932 1156 928 1104 942 1084 972 1078 980 1060Z"/>
            <path class="border" d="M264 226 278 276 246 290 240 306 170 342 168 372 132 376 120 400 106 440V474H60M168 372 166 394H122M168 372 226 414 196 420 218 570H128L120 584M226 414 340 510 356 512 462 436M410 192 412 220 400 250 430 320 460 266M430 320V400L462 436 510 450 522 436 640 500 652 498 656 466 740 458 820 464M656 294 648 320 656 466M356 512 350 570 290 584 230 610 214 660M290 584 300 590 330 630 348 630 356 604 380 600 396 612 494 604M348 630 346 700M510 450 522 550 490 590 494 604 504 640 490 650 470 700 420 744M640 500 636 570 612 590V620L628 650 606 684 560 690 548 704 516 704 500 656 504 640M628 650 640 680 690 740 602 756 576 740 562 764 520 766 500 736 516 704M640 680 646 664 700 668 720 660 740 668 768 626 772 650 784 670 770 694 796 740 786 764H734L690 740M850 534 824 550 820 590 812 620 784 660M824 586 868 588 906 630M900 640 930 680 980 692 998 676V648M980 692 940 742 886 766H840L796 740M886 766 888 840M786 764 796 800 786 836 836 870 858 900M734 764 744 784 710 840 720 900 734 956 706 962 704 1010 724 1040 704 1016 650 1004 612 1000 606 940 580 938 576 950H548L534 918H474M712 850H740L720 880M562 764 550 840 524 880 510 900 476 910M520 766 524 790 500 800 498 850 470 860M524 790 450 786 440 800M464 1102H560L572 1112 656 1110M640 1000V1026L612 1030V1090L640 1108M656 1110 680 1108 716 1076 776 1050V980L734 956M716 1076 768 1090V1150L744 1186M656 1110 668 1140 700 1170M776 980 800 1004 830 1012 874 994M792 1004 790 1040 806 1060 800 1096 784 1070 776 1050M656 1110 600 1120 596 1180 584 1190 580 1296 556 1306 530 1290M584 1250 600 1266 620 1240M62 560 96 562 122 590 120 610M56 604H100M56 622 122 618 160 630 180 660H226M180 660 178 700 190 742M120 618 140 640 110 680M140 680 160 690 184 720M818 200 890 190 934 186 952 210 946 240 960 270 986 310M890 190 884 236 820 276M800 276H840L850 264 950 330 984 340M850 280 826 300 834 320 800 336M918 548H976L1000 524 1042 518 1090 496 1092 460 1048 446M1042 518 1060 556M1076 180 1112 164 1164 180 1176 206 1164 260 1180 300 1170 324 1200 372 1186 392M1176 206 1190 218 1226 196 1262 180 1318 160 1326 190H1386L1400 214 1396 234 1358 236 1356 260 1374 276 1366 310 1344 350 1296 370 1314 420M1326 190 1310 236 1290 280 1250 300 1248 324H1170M1400 214 1430 240V300L1460 316"/>
            <path class="water" d="M750 826 796 820 780 866 750 864Z"/>
          </g>
          <g transform="translate(2800 1180) scale(.48469 .49745)">
            <!-- East Asia and the islands of the Pacific -->
            <path d="M-100 150 0 385 22 430 24 444 36 454 60 430 68 396 64 368 86 360 128 316 160 292 204 290 212 306 234 336 236 360 244 366 262 350 276 362 280 380 290 410 288 440 284 452 300 476 310 500 322 516 346 530 336 500 324 486 304 456 292 440 300 400 314 404 334 406 336 424 366 426 362 444 404 414 402 374 376 340 366 320 380 300 418 298 484 282 524 246 554 196 536 186 552 178 550 160 522 120 540 94 560 90 520 92 504 72 554 36 562 44 552 60 590 46 596 80 614 82 614 128 640 116 642 90 626 66 650 20 640 0H-100ZM404 328 414 320 426 320 418 334ZM538 272 542 262 552 258 548 276 540 286ZM770 48 782 36 790 62 778 80 778 112 764 122 734 124 718 138 712 128 664 136 686 120 724 114 732 92 744 98 766 76ZM652 148 668 142 668 158 656 168ZM682 142 698 136 698 144 686 148ZM536 376 540 346 546 336 558 342 558 362 546 378ZM564 460 592 460 600 442 608 466 596 480 586 478ZM560 396 568 408 562 412ZM576 420 586 426 582 436ZM590 408 596 416 594 420ZM246 490 272 494 310 530 368 586 360 616 310 576 286 530ZM366 626 380 622 408 630 428 626 468 648 400 640ZM408 536 420 544 440 524 478 504 500 474 516 492 504 508 504 536 514 540 492 576 476 594 450 584 424 586 408 552ZM524 570 536 558 560 564 546 570 566 600 554 602 544 580 536 612 526 590ZM534 542 570 538 586 544 556 544ZM582 664 606 650 592 660ZM626 544 632 538 632 546ZM630 586 656 586 650 590 632 590ZM666 562 692 562 708 590 740 570 780 582 834 602 836 616 858 626 864 646 886 664 864 664 830 638 802 656 780 652 762 654 762 640 740 606 710 598 692 594 694 584 668 574ZM884 620 900 616 910 602 908 612 894 620ZM944 616 954 628 946 622ZM1210 754 1218 754 1214 760ZM366 574 378 580 376 584Z"/>
            <!-- Australia and New Zealand -->
            <path d="M460 816 468 818 498 794 542 786 564 762 566 746 576 750 580 738 596 738 598 722 608 714 624 716 630 728 644 728 660 696 686 686 706 694 722 692 712 720 730 738 772 758 786 744 796 678 804 688 812 720 826 724 842 768 870 790 880 812 892 818 918 848 920 870 928 904 910 960 890 990 844 1034 812 1030 774 1018 752 970 742 978 740 944 730 962 718 974 702 946 674 932 606 940 574 962 526 964 508 978 480 972 478 960 486 960 484 934 476 900 458 866 466 864 460 844ZM842 1076 862 1076 856 1098 846 1104ZM1180 1008 1198 1022 1218 1018 1212 1036 1194 1052 1180 1070 1182 1054 1168 1040 1178 1028ZM1164 984 1172 986 1168 992ZM1084 1136 1110 1104 1132 1102 1150 1096 1134 1116 1128 1136 1112 1152Z"/>
            <path class="border" d="M44 160 50 176 74 186 130 216 162 218 166 236M74 186 66 208 96 224 160 238M166 218 204 214 210 230 172 234ZM210 222 236 202 250 200 270 212 284 230V244L270 262 284 280 300 298 320 296M270 212 266 230 240 240 232 266 218 268 212 300M160 238 158 262 168 270 166 290M166 248 210 256 196 276 206 290M320 296 296 314 270 324 284 360 276 380 290 410M320 284 350 280 384 290M320 296 352 316 386 360 388 404 370 420M310 320 314 338H346L362 370 364 386H386M364 386 334 388 328 404M780 580V654M420 540 466 534 480 502H512M304 484H322"/>
          </g>
        </svg>

        <button type="button" class="cluster at-west">7</button>
        <button type="button" class="cluster at-east">7</button>
        <button type="button" class="cluster at-europe">3</button>
        <button type="button" class="cluster at-gulf">2</button>
        <div class="site pin at-mpls"><svg class="pin-icon" viewBox="0 0 46 70"><path d="M23 3C12 3 3 11.500 3 23c0 10 13 31 20 44 7-13 20-34 20-44C43 11.500 34 3 23 3z"/><circle cx="23" cy="23" r="12"/></svg><span>mpls</span></div>
        <div class="site at-azure"><span class="cloud"><svg class="azure" viewBox="0 0 96 96"><defs><linearGradient id="az1" x1=".8" y1="0" x2=".3" y2="1"><stop stop-color="#114a8b"/><stop offset="1" stop-color="#0669bc"/></linearGradient><linearGradient id="az2" x1=".3" y1="0" x2=".7" y2="1"><stop stop-color="#3ccbf4"/><stop offset="1" stop-color="#2892df"/></linearGradient></defs><path fill="url(#az1)" d="M33.338 6.544h26.038l-27.03 80.087a4.152 4.152 0 0 1-3.933 2.824H8.149a4.145 4.145 0 0 1-3.928-5.470L29.404 9.368a4.152 4.152 0 0 1 3.934-2.825z"/><path fill="#0078d4" d="M71.175 60.261h-41.290a1.911 1.911 0 0 0-1.305 3.309l26.532 24.764a4.171 4.171 0 0 0 2.846 1.121h23.380z"/><path fill="url(#az2)" d="M66.595 9.364a4.145 4.145 0 0 0-3.928-2.820H33.648a4.146 4.146 0 0 1 3.928 2.820l25.184 74.620a4.146 4.146 0 0 1-3.928 5.472h29.020a4.146 4.146 0 0 0 3.927-5.472z"/></svg></span><span>Azure South Africa North</span></div>
        <div class="site at-gcp"><span class="cloud"><svg class="gcp" viewBox="0 0 256 206"><path fill="#ff1428" d="M170.250 56.820 192.500 34.570 193.990 25.200C153.440-11.680 88.980-7.500 52.420 33.920 42.270 45.420 34.730 59.760 30.720 74.570L38.690 73.450 83.190 66.110 86.630 62.600C106.420 40.850 139.900 37.930 162.760 56.430z"/><path fill="#0085ff" d="M224.200 73.920C219.090 55.080 208.590 38.150 193.990 25.200L162.760 56.430C175.940 67.200 183.460 83.440 183.130 100.470V106.010C198.490 106.010 210.930 118.450 210.930 133.810 210.930 149.160 198.490 161.290 183.130 161.290H127.460L122 167.220V200.560L127.460 205.800H183.130C223.060 206.110 255.690 174.300 256 134.370 256.190 110.170 244.250 87.480 224.200 73.920"/><path fill="#00ae47" d="M71.870 205.800H127.460V161.290H71.870C67.910 161.290 64.070 160.440 60.470 158.790L52.580 161.210 30.180 183.460 28.220 191.040C40.790 200.530 56.120 205.860 71.870 205.800"/><path fill="#ffb900" d="M71.870 61.430C31.940 61.660-.24 94.230 0 134.160.13 156.460 10.550 177.450 28.220 191.040L60.470 158.790C46.480 152.470 40.260 136.010 46.580 122.020 52.900 108.030 69.370 101.810 83.360 108.130 89.520 110.910 94.460 115.850 97.250 122.020L129.490 89.770C115.770 71.830 94.450 61.340 71.870 61.430"/></svg></span><span>GCP Sydney, Australia</span></div>

        <div class="map-options">
          <label class="option"><input type="checkbox">High contrast</label>
          <label class="option"><input type="checkbox">Show links</label>
        </div>
        <div class="zoom">
          <button type="button" aria-label="Zoom in"><svg class="sign" viewBox="0 0 24 24"><path d="M0 12h24M12 0v24"/></svg></button>
          <button type="button" aria-label="Zoom out" disabled><svg class="sign" viewBox="0 0 24 24"><path d="M0 12h24"/></svg></button>
        </div>
      </section>
    </div>
  </main>
</div>
</body>
</html>
```
FILE: styles.css
```css
* { box-sizing: border-box; }

body {
  margin: 0;
  min-height: 100vh;
  display: flex;
  flex-direction: column;
  background: #fff;
  color: #363636;
  font: 28px/32px Roboto, sans-serif;
}

button, input, select { font: inherit; color: inherit; }
button { padding: 0; border: 0; background: none; cursor: pointer; }
h1, h2 { margin: 0; font-weight: 500; }

svg { display: block; flex: none; overflow: visible; fill: none; stroke: currentColor; stroke-width: 2; }
.defs { position: absolute; width: 0; height: 0; }
.icon { width: 32px; height: 32px; }
.mini { width: 16px; height: 16px; }
.caret { width: 16px; height: 9px; }
.collapse { width: 24px; height: 24px; color: #0085d7; }

/* licence banner */
.banner {
  height: 80px;
  display: flex;
  align-items: center;
  justify-content: center;
  gap: 32px;
  background: #db8400;
  color: #fff;
  font-size: 32px;
  font-weight: 500;
}
.banner-action {
  height: 48px;
  padding: 0 16px;
  border: 2px solid rgba(255, 255, 255, .85);
  border-radius: 6px;
}
.banner-close { width: 64px; display: flex; justify-content: center; }

/* top bar */
.topbar {
  position: relative;
  z-index: 1;
  height: 96px;
  padding: 0 48px 0 32px;
  display: flex;
  align-items: center;
  gap: 36px;
  background: #184d7e;
  box-shadow: 0 4px 14px rgba(0, 0, 0, .3);
  font-size: 32px;
}
.logo { width: 80px; height: 65px; margin-right: 14px; color: #fff; stroke-width: 7; }
.logo circle { stroke-width: 3; }
.picker { display: grid; align-items: center; }
.picker select, .picker svg { grid-area: 1 / 1; }
.picker select {
  appearance: none;
  height: 60px;
  padding: 0 48px 0 16px;
  border: 0;
  border-radius: 4px;
  background: #fff;
  color: #184d7e;
}
.picker svg { justify-self: end; margin-right: 16px; color: #757575; pointer-events: none; }
.snapshot {
  height: 60px;
  padding: 0 16px 0 24px;
  display: flex;
  align-items: center;
  border-radius: 4px;
  background: #fff;
  color: #184d7e;
}
.star { margin-right: 24px; color: #0085d7; }
.time { margin: 0 8px 0 16px; }
.zone { font-size: 22px; color: #757575; padding-top: 4px; }
.snapshot .caret { margin-left: 14px; color: #757575; }
.account { margin-left: auto; display: flex; align-items: center; gap: 48px; color: #fff; }
.bell { opacity: .45; }

.layout { flex: 1; display: flex; }

/* navigation */
.sidebar {
  position: relative;
  z-index: 2;
  flex: none;
  width: 368px;
  background: #f9f9f9;
  box-shadow: 1px 0 4px rgba(0, 0, 0, .25);
  clip-path: inset(0 -8px 0 0);
}
.collapse-nav { height: 56px; margin-left: auto; padding: 8px 21px 0 0; display: flex; align-items: center; }
.sidebar h2 { height: 56px; padding: 8px 32px 0; font-size: 28px; }
.item {
  height: 80px;
  padding-left: 32px;
  display: grid;
  grid-template-columns: 32px 80px 1fr;
  align-items: center;
  color: inherit;
  text-decoration: none;
}
.item .mini { justify-self: center; grid-column: 1; }
.glyph {
  grid-column: 2;
  width: 64px;
  height: 64px;
  display: flex;
  align-items: center;
  justify-content: center;
  border-radius: 50%;
}
.active { color: #184d7e; }
.active .glyph { background: #184d7e; color: #fff; }
.nqe { font: 700 13px Roboto, sans-serif; text-anchor: middle; fill: #363636; stroke: none; }
hr { height: 2px; margin: 16px 32px; border: 0; background: #d8d8d8; }

/* page */
main { flex: 1; min-width: 0; padding: 32px; display: flex; flex-direction: column; gap: 32px; }
input::placeholder { color: #9b9b9b; opacity: 1; font-style: italic; }
.searchbar {
  height: 96px;
  display: flex;
  border: 2px solid #9b9b9b;
  border-radius: 6px;
  overflow: hidden;
}
.searchbar button {
  width: 100px;
  padding-left: 20px;
  display: flex;
  align-items: center;
  gap: 16px;
  background: #f1f1f1;
  color: #9b9b9b;
}
.searchbar input { flex: 1; padding: 0 16px; border: 0; font-size: 33px; }

.panels { flex: 1; display: flex; gap: 32px; }
.panel { border-radius: 6px; background: #fff; box-shadow: 0 2px 8px rgba(0, 0, 0, .3); }

.search-panel { flex: none; width: 768px; }
.panel-head {
  height: 64px;
  padding: 0 20px 0 32px;
  display: flex;
  align-items: center;
  justify-content: space-between;
  border-bottom: 2px solid #d8d8d8;
  border-radius: 6px 6px 0 0;
  background: #f9f9f9;
}
h1 { font-size: 36px; font-weight: 400; color: #184d7e; }
.fold {
  width: 100%;
  height: 98px;
  padding-left: 40px;
  display: flex;
  align-items: center;
  gap: 24px;
  border-bottom: 2px solid #d8d8d8;
  font-size: 32px;
}
.fold.open { height: 96px; border-bottom: 0; }
.open .mini { transform: rotate(180deg); }
.path-form { padding: 16px 32px 32px 80px; display: flex; flex-direction: column; gap: 48px; }
.field { display: flex; flex-direction: column; gap: 8px; color: #757575; }
.field label span { font-weight: 300; }
.field input {
  height: 64px;
  padding: 0 14px;
  border: 2px solid #9b9b9b;
  border-radius: 5px;
  color: #363636;
  font-size: 33px;
}
.primary {
  width: 160px;
  height: 64px;
  border-radius: 5px;
  background: #0085d7;
  box-shadow: 0 2px 5px rgba(0, 0, 0, .35);
  color: #fff;
  font-weight: 700;
}

/* map */
.map-panel { position: relative; flex: 1; min-width: 0; }
.world { position: absolute; inset: 0; width: 100%; height: 100%; overflow: hidden; fill: #e4e4e4; stroke: none; }
.world .border { fill: none; stroke: #fff; stroke-width: 2; vector-effect: non-scaling-stroke; }
.world .water { fill: #fff; }
.cluster {
  position: absolute;
  width: 76px;
  height: 48px;
  border: 6px solid #363636;
  border-radius: 24px;
  background: #fff;
  font-size: 32px;
  transform: translate(-50%, -50%);
}
.site {
  position: absolute;
  display: flex;
  flex-direction: column;
  align-items: center;
  gap: 12px;
  white-space: nowrap;
  text-shadow: 0 0 2px #fff, 0 0 2px #fff;
  transform: translate(-50%, -30px);
}
.pin { transform: translate(-50%, 0); }
.pin-icon { width: 46px; height: 70px; fill: #fff; stroke-width: 6; }
.pin-icon circle { fill: #363636; stroke: none; }
.cloud {
  width: 60px;
  height: 60px;
  display: flex;
  align-items: center;
  justify-content: center;
  border: 2px solid #363636;
  border-radius: 50%;
  background: #fff;
}
.azure { width: 38px; height: 38px; stroke: none; }
.gcp { width: 40px; height: 32px; stroke: none; }
.at-west { left: 20.550%; top: 55%; }
.at-east { left: 29.350%; top: 55.900%; }
.at-europe { left: 52.300%; top: 48.750%; }
.at-gulf { left: 65.450%; top: 61.750%; }
.at-mpls { left: 50%; top: 65.500%; }
.at-azure { left: 56.800%; top: 79.400%; }
.at-gcp { left: 86.500%; top: 82.600%; }

.map-options { position: absolute; left: 32px; bottom: 32px; display: flex; gap: 32px; }
.option {
  height: 64px;
  padding: 0 16px;
  display: flex;
  align-items: center;
  gap: 20px;
  border-radius: 6px;
  background: #fff;
  box-shadow: 0 1px 4px rgba(0, 0, 0, .3);
}
.option input {
  appearance: none;
  width: 64px;
  height: 32px;
  margin: 0;
  border: 2px solid #9b9b9b;
  border-radius: 16px;
  background: radial-gradient(circle at 14px 50%, #fff 10px, #bbb 11px, #e4e4e4 13px);
}
.zoom {
  position: absolute;
  right: 32px;
  bottom: 32px;
  width: 64px;
  border-radius: 6px;
  background: #fff;
  box-shadow: 0 1px 4px rgba(0, 0, 0, .3);
}
.zoom button { width: 100%; height: 64px; padding-top: 2px; display: flex; align-items: center; justify-content: center; color: #0085d7; }
.zoom button + button { border-top: 2px solid #d8d8d8; color: #b5b5b5; }
.sign { width: 24px; height: 24px; stroke-width: 4; }
```
